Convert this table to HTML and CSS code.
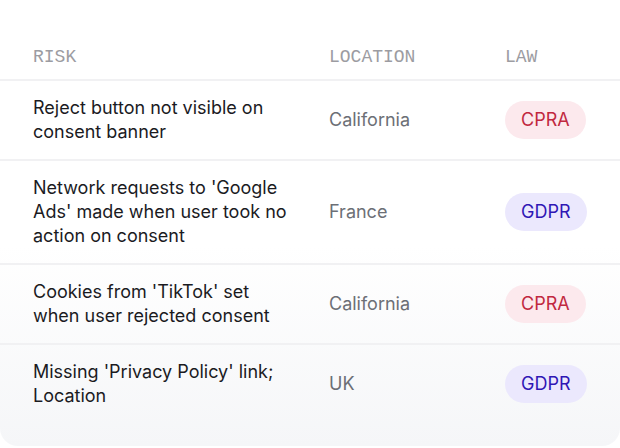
FILE: index.html
```html
<!DOCTYPE html>
<html>
<head>
<meta charset="UTF-8">
<title>Risks</title>
<link rel="stylesheet" href="styles.css">
</head>
<body>
<div class="card">
	<div class="row head">
		<div class="col-risk">RISK</div>
		<div class="col-loc">LOCATION</div>
		<div class="col-law">LAW</div>
	</div>
	<div class="row">
		<div class="col-risk">Reject button not visible on consent banner</div>
		<div class="col-loc">California</div>
		<div class="col-law"><span class="badge cpra">CPRA</span></div>
	</div>
	<div class="row">
		<div class="col-risk">Network requests to 'Google Ads' made when user took no action on consent</div>
		<div class="col-loc">France</div>
		<div class="col-law"><span class="badge gdpr">GDPR</span></div>
	</div>
	<div class="row">
		<div class="col-risk">Cookies from 'TikTok' set when user rejected consent</div>
		<div class="col-loc">California</div>
		<div class="col-law"><span class="badge cpra">CPRA</span></div>
	</div>
	<div class="row last">
		<div class="col-risk">Missing 'Privacy Policy' link; Location</div>
		<div class="col-loc">UK</div>
		<div class="col-law"><span class="badge gdpr">GDPR</span></div>
	</div>
</div>
</body>
</html>
```

FILE: styles.css
```css
body {margin: 0;
	background: #ffffff;
	font-family: Inter, "Liberation Sans", sans-serif;}

.card {height: 446px;
	box-sizing: border-box;
	padding-top: 46px;
	border-radius: 0 0 18px 18px;
	background: linear-gradient(to bottom, #ffffff 0%, #ffffff 55%, #f5f6f8 100%);}

.row {display: grid;
	grid-template-columns: 296px 176px auto;
	align-items: center;
	padding: 15px 0 15px 33px;
	border-bottom: 2px solid #f1f1f3;
	font-size: 18px;
	line-height: 24px;
	color: #1b1b1f;}

.col-risk {padding-right: 36px;}

.row.head {padding-top: 0;
	padding-bottom: 11px;
	font-family: "Liberation Mono", "DejaVu Sans Mono", monospace;
	font-size: 18px;
	line-height: 22px;
	color: #9c9ca2;}

.row.last {border-bottom: none;}

.col-loc {color: #6c6f76;}
.head .col-loc {color: #9c9ca2;}

.badge {display: inline-block;
	padding: 7px 16px;
	border-radius: 19px;
	line-height: 24px;}

.badge.cpra {background: #fce9ed;
	color: #c1283f;}

.badge.gdpr {background: #ebe8fd;
	color: #2f17b5;}
```
